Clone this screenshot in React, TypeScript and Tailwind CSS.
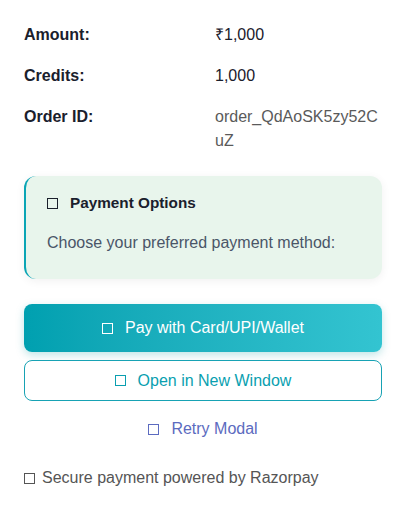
import React from "react";

function Box({ className }: { className?: string }) {
  return <span className={`inline-block w-[11px] h-[11px] border-[1.5px] shrink-0 ${className ?? ""}`} />;
}

const rows = [
  { label: "Amount:", value: "₹1,000", muted: false },
  { label: "Credits:", value: "1,000", muted: false },
  { label: "Order ID:", value: "order_QdAoSK5zy52CuZ", muted: true },
];

export default function App() {
  return (
    <div className="w-[406px] h-[513px] bg-white px-6 pt-[23px] font-['Liberation_Sans',Arial,sans-serif] text-base leading-6">
      <div className="flex flex-col gap-[17px]">
        {rows.map((r) => (
          <div key={r.label} className="flex">
            <div className="w-[191px] shrink-0 font-bold text-[#1a202c]">{r.label}</div>
            <div className={`w-[167px] break-all ${r.muted ? "text-[#5a5a5a]" : "text-[#1a202c]"}`}>
              {r.value}
            </div>
          </div>
        ))}
      </div>

      <div className="mt-[23px] rounded-xl border-l-2 border-[#0aa5b5] bg-[#e8f5ec] shadow-[0_2px_10px_rgba(0,0,0,0.06)] pl-[21px] pr-4 pt-[15px] pb-[24px]">
        <div className="flex items-center gap-[12px] font-bold text-[#1a202c]">
          <Box className="border-[#1a202c]" />
          <span className="text-[15.3px]">Payment Options</span>
        </div>
        <div className="mt-[16px] text-[#4a5568]">Choose your preferred payment method:</div>
      </div>

      <button className="mt-[25px] w-full h-[48px] rounded-lg bg-gradient-to-r from-[#00a0b0] to-[#33c4d1] text-white flex items-center justify-center gap-[12px] shadow-[0_3px_8px_rgba(0,150,160,0.25)]">
        <Box className="border-white" />
        <span>Pay with Card/UPI/Wallet</span>
      </button>

      <button className="mt-[8px] w-full h-[41px] rounded-lg border border-[#17a2b4] bg-white text-[#0a9fb0] flex items-center justify-center gap-[12px]">
        <Box className="border-[#0a9fb0]" />
        <span>Open in New Window</span>
      </button>

      <div className="mt-[16px] flex items-center justify-center gap-[12px] text-[#5c6bc0]">
        <Box className="border-[#5c6bc0]" />
        <span>Retry Modal</span>
      </div>

      <div className="mt-[25px] flex items-center gap-[7px] text-[#555]">
        <Box className="border-[#555]" />
        <span>Secure payment powered by Razorpay</span>
      </div>
    </div>
  );
}
